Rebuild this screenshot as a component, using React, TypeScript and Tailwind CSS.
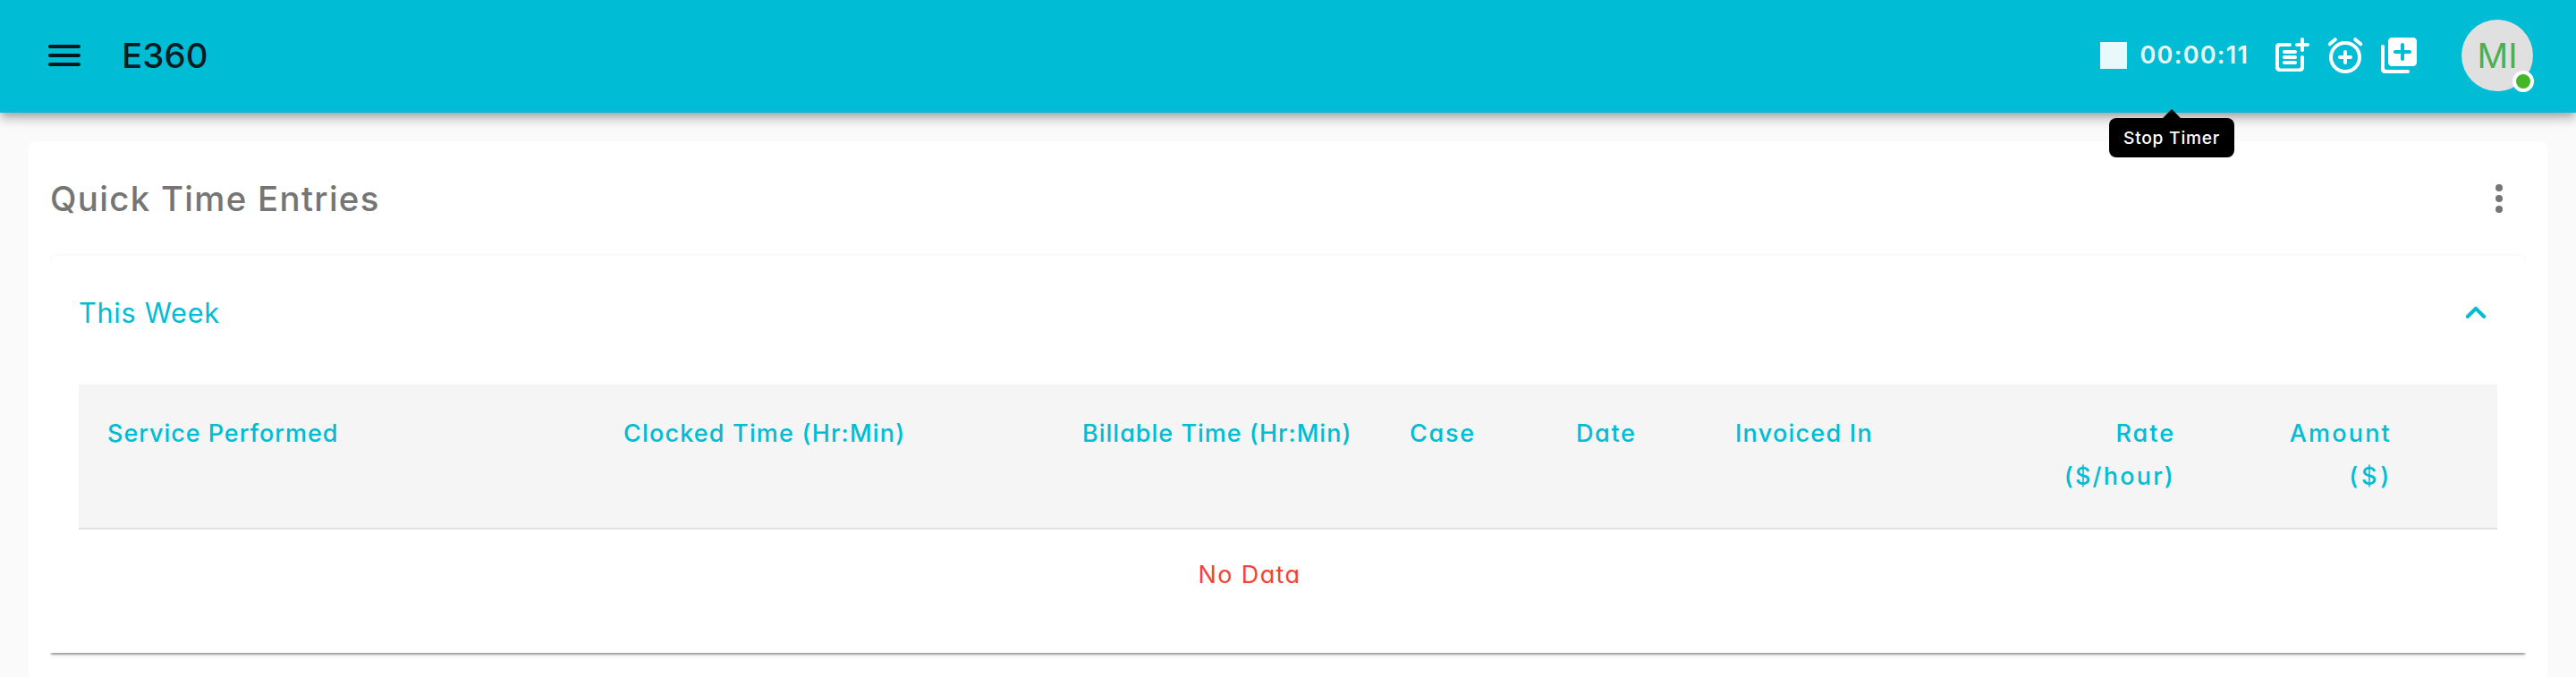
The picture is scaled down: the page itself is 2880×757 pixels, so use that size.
import type { ReactNode } from "react";

function Icon({ className, children }: { className?: string; children: ReactNode }) {
  return (
    <svg viewBox="0 0 24 24" fill="currentColor" className={`size-12 shrink-0 ${className ?? ""}`}>
      {children}
    </svg>
  );
}

function MenuIcon() {
  return (
    <Icon className="text-black/87">
      <path d="M4 18h16c.55 0 1-.45 1-1s-.45-1-1-1H4c-.55 0-1 .45-1 1s.45 1 1 1zm0-5h16c.55 0 1-.45 1-1s-.45-1-1-1H4c-.55 0-1 .45-1 1s.45 1 1 1zM3 7c0 .55.45 1 1 1h16c.55 0 1-.45 1-1s-.45-1-1-1H4c-.55 0-1 .45-1 1z" />
    </Icon>
  );
}

function PostAddIcon() {
  return (
    <Icon>
      <path d="M18 12c-.55 0-1 .45-1 1v5.22c0 .55-.45 1-1 1H6c-.55 0-1-.45-1-1V8c0-.55.45-1 1-1h5c.55 0 1-.45 1-1s-.45-1-1-1H5c-1.1 0-2 .9-2 2v12c0 1.1.9 2 2 2h12c1.1 0 2-.9 2-2v-6c0-.55-.45-1-1-1z" />
      <path d="M21.02 5H19V2.98c0-.54-.44-.98-.98-.98h-.03c-.55 0-.99.44-.99.98V5h-2.01c-.54 0-.98.44-.99.98v.03c0 .55.44.99.99.99H17v2.01c0 .54.44.99.99.98h.03c.54 0 .98-.44.98-.98V7h2.02c.54 0 .98-.44.98-.98v-.04c0-.54-.44-.98-.98-.98z" />
      <path d="M14 9H8c-.55 0-1 .45-1 1s.45 1 1 1h6c.55 0 1-.45 1-1s-.45-1-1-1zM14 12H8c-.55 0-1 .45-1 1s.45 1 1 1h6c.55 0 1-.45 1-1s-.45-1-1-1zM14 15H8c-.55 0-1 .45-1 1s.45 1 1 1h6c.55 0 1-.45 1-1s-.45-1-1-1z" />
    </Icon>
  );
}

function AlarmAddIcon() {
  return (
    <Icon>
      <g fill="none" stroke="currentColor" strokeWidth="2" strokeLinecap="round">
        <circle cx="12" cy="13" r="8" />
        <path d="M12 10v6M9 13h6M3.35 5.65l3.05-2.55M20.65 5.65l-3.05-2.55" />
      </g>
    </Icon>
  );
}

function LibraryAddIcon() {
  return (
    <Icon>
      <path d="M3 6c-.55 0-1 .45-1 1v13c0 1.1.9 2 2 2h13c.55 0 1-.45 1-1s-.45-1-1-1H5c-.55 0-1-.45-1-1V7c0-.55-.45-1-1-1zm17-4H8c-1.1 0-2 .9-2 2v12c0 1.1.9 2 2 2h12c1.1 0 2-.9 2-2V4c0-1.1-.9-2-2-2zm-2 9h-3v3c0 .55-.45 1-1 1s-1-.45-1-1v-3h-3c-.55 0-1-.45-1-1s.45-1 1-1h3V6c0-.55.45-1 1-1s1 .45 1 1v3h3c.55 0 1 .45 1 1s-.45 1-1 1z" />
    </Icon>
  );
}

function MoreIcon() {
  return (
    <Icon className="text-[#757575]">
      <circle cx="12" cy="6" r="2" />
      <circle cx="12" cy="12" r="2" />
      <circle cx="12" cy="18" r="2" />
    </Icon>
  );
}

function ExpandLessIcon() {
  return (
    <Icon className="text-[#00bcd4]">
      <path d="M11.29 8.71L6.7 13.3c-.39.39-.39 1.02 0 1.41.39.39 1.02.39 1.41 0L12 10.83l3.88 3.88c.39.39 1.02.39 1.41 0 .39-.39.39-1.02 0-1.41L12.7 8.71c-.38-.39-1.02-.39-1.41 0z" />
    </Icon>
  );
}

function Timer() {
  return (
    <div className="relative flex w-[190px] items-center text-[#e9f9fb]">
      <span className="size-[30px] shrink-0 bg-[#e9f9fb]" />
      <span className="ml-[14.5px] text-[27px] leading-[48px] font-semibold tracking-[1.3px] whitespace-nowrap">00:00:11</span>
      <div className="absolute top-[94px] left-[10px] z-20 flex h-11 w-[140px] justify-center rounded-lg bg-black">
        <span className="absolute -top-[7px] left-[63px] size-[14px] rotate-45 bg-black" />
        <span className="relative text-[19.2px] leading-11 font-medium tracking-[0.75px] whitespace-nowrap text-white">Stop Timer</span>
      </div>
    </div>
  );
}

function TopBar() {
  return (
    <header className="relative z-10 flex h-[126px] items-center bg-[#00bcd4] px-12 pb-0.5 shadow-[0_4px_8px_-2px_rgba(0,0,0,0.2),0_8px_10px_0_rgba(0,0,0,0.14),0_2px_20px_0_rgba(0,0,0,0.12)]">
      <MenuIcon />
      <h1 className="ml-10 text-[38.4px] leading-[64px] font-medium tracking-[0.1px] text-black/87">E360</h1>
      <div className="ml-auto flex items-center text-white">
        <Timer />
        <div className="flex gap-3">
          <PostAddIcon />
          <AlarmAddIcon />
          <LibraryAddIcon />
        </div>
        <div className="relative ml-[46px] flex size-20 items-center justify-center rounded-full bg-[#e0e0e0] pt-0.5 text-[38.4px] text-[#4caf50]">
          MI
          <span className="absolute right-[-1px] bottom-[-1px] size-6 rounded-full border-4 border-white bg-[#44b729]" />
        </div>
      </div>
    </header>
  );
}

function EntriesTable() {
  return (
    <div className="mx-8 text-[27px] leading-[48px] font-medium text-[#00bcd4]">
      <div className="grid h-[162px] grid-cols-[577px_513px_366px_185px_178px_283px_275px_242px_85px] border-b-2 border-[#e0e0e0] bg-[#f5f5f5] pt-[31px] whitespace-nowrap">
        <div className="pl-8 tracking-[0.95px]">Service Performed</div>
        <div className="pl-8 tracking-[1.17px]">Clocked Time (Hr:Min)</div>
        <div className="pl-8 tracking-[1px]">Billable Time (Hr:Min)</div>
        <div className="pl-8 tracking-[1.7px]">Case</div>
        <div className="pl-[33px] tracking-[1.6px]">Date</div>
        <div className="pl-[33px] tracking-[1.25px]">Invoiced In</div>
        <div className="pr-8 text-right">
          <div className="pr-px tracking-[2px]">Rate</div>
          <div className="pr-px tracking-[2.2px]">($/hour)</div>
        </div>
        <div className="pr-8 text-right">
          <div className="pr-px tracking-[2.2px]">Amount</div>
          <div className="tracking-[3.8px]">($)</div>
        </div>
        <div />
      </div>
      <p className="h-[138px] pt-[27px] pr-[86px] text-center font-normal tracking-[1.4px] text-[#f44336]">No Data</p>
    </div>
  );
}

export default function App() {
  return (
    <div className="h-[757px] w-[2880px] overflow-hidden bg-[#fafafa] font-[Inter,sans-serif] [font-feature-settings:'cv11']">
      <TopBar />
      <main className="px-8 pt-8">
        <section className="h-[640px] rounded-lg bg-white px-6">
          <div className="flex h-32 items-center justify-between pr-1.5">
            <h2 className="text-[38.4px] leading-[64px] font-medium tracking-[1.3px] text-[#757575]">Quick Time Entries</h2>
            <MoreIcon />
          </div>
          <div className="rounded-t-lg bg-white shadow-[0_4px_2px_-2px_rgba(0,0,0,0.2),0_2px_2px_0_rgba(0,0,0,0.14),0_2px_6px_0_rgba(0,0,0,0.12)] [clip-path:inset(-10px_0)]">
            <div className="mb-4 flex h-32 items-center justify-between px-8">
              <h3 className="text-[30.7px] leading-[48px] tracking-[0.7px] text-[#00bcd4]">This Week</h3>
              <ExpandLessIcon />
            </div>
            <EntriesTable />
          </div>
        </section>
      </main>
    </div>
  );
}
